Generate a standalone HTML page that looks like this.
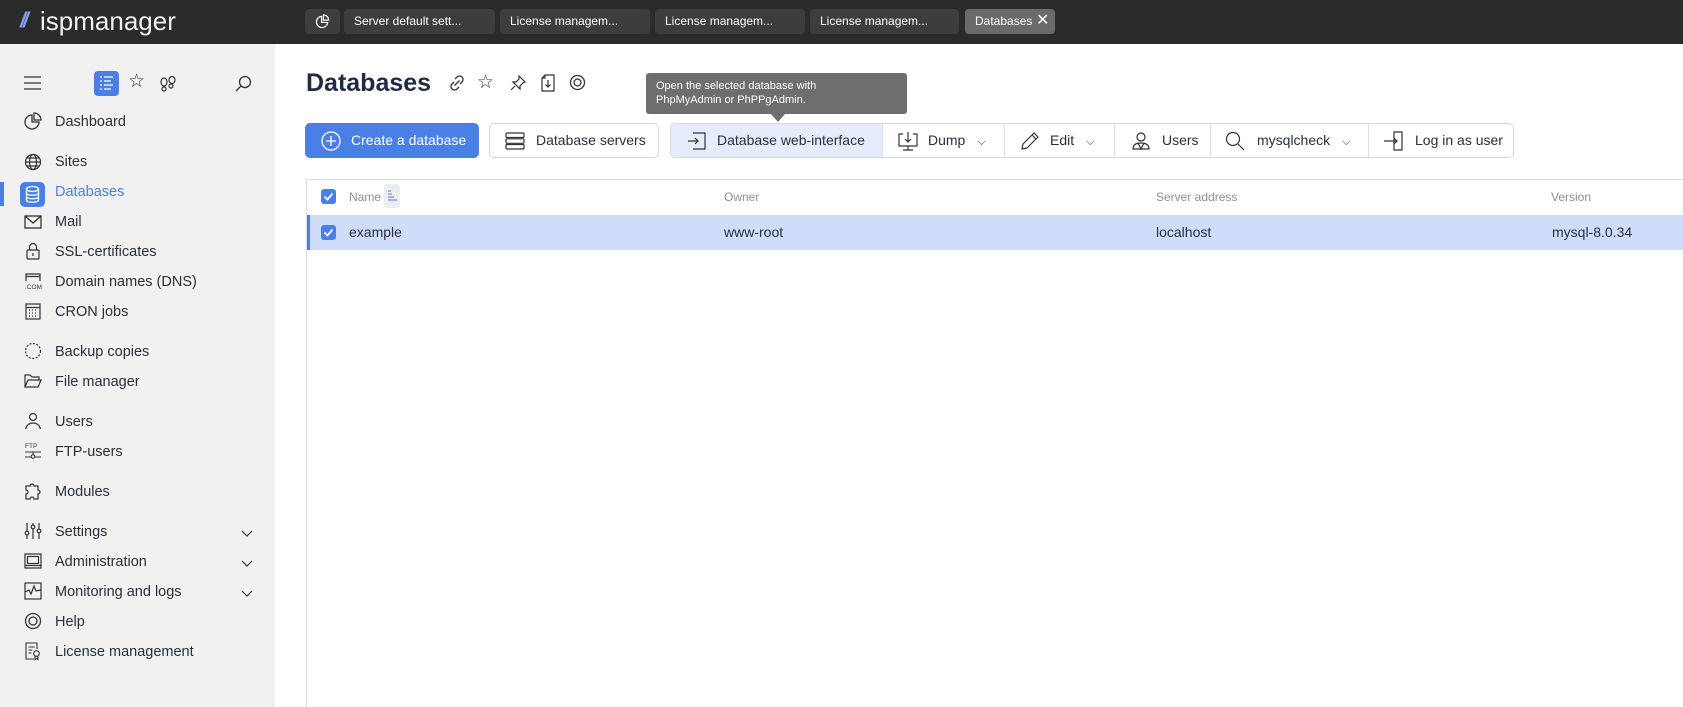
<!DOCTYPE html>
<html><head><meta charset="utf-8"><style>
*{box-sizing:border-box;margin:0;padding:0}
body{width:1683px;height:707px;overflow:hidden;font-family:"Liberation Sans",sans-serif;background:#fff;position:relative;color:#2a2f3a}
.a{position:absolute}
#top{left:0;top:0;width:1683px;height:44px;background:#2b2b2b}
.tab{position:absolute;top:9px;height:25px;background:#3d3d3d;border-radius:4px;color:#fff;font-size:12px;line-height:25px;padding-left:10px;white-space:nowrap}
#side{left:0;top:44px;width:275px;height:663px;background:#f1f1f1}
.mi{position:absolute;left:55px;font-size:14.5px;color:#2a2f3a;white-space:nowrap}
.ic{position:absolute;left:24px;width:18px;height:18px;margin-top:-2px}
.chev{position:absolute;left:241px;width:12px;height:12px}
.btn{position:absolute;top:123px;height:35px;border:1px solid #d5d8de;border-radius:5px;font-size:14px;line-height:33px;white-space:nowrap;color:#2a2f3a}
.seg{position:absolute;top:0;height:33px;border-right:1px solid #dcdfe4;font-size:14px;line-height:33px;white-space:nowrap}
.th{position:absolute;top:190px;font-size:12px;color:#8a8f98}
.td{position:absolute;top:224px;font-size:14px;color:#2a2f3a}
.cb{position:absolute;width:15px;height:15px;background:#4a7fe6;border-radius:3px}
svg{overflow:visible}
</style></head><body>
<div id="top" class="a">
 <div class="a" style="left:20px;top:9px;color:#7da0f0;font-weight:bold;font-style:italic;font-size:21px;letter-spacing:-3px">//</div>
 <div class="a" style="left:40px;top:6px;color:#f0f0f0;font-size:26px">ispmanager</div>
 <div class="tab" style="left:305px;width:35px;padding:0"><svg class="a" style="left:10px;top:5px" width="15" height="15" viewBox="0 0 16 16" fill="none" stroke="#fff" stroke-width="1.3"><path d="M7 2.5A6 6 0 1 0 13.5 9H7z"/><path d="M9 1v5.5h5.5A5.5 5.5 0 0 0 9 1z"/></svg></div>
 <div class="tab" style="left:344px;width:151px">Server default sett...</div>
 <div class="tab" style="left:500px;width:150px">License managem...</div>
 <div class="tab" style="left:655px;width:150px">License managem...</div>
 <div class="tab" style="left:810px;width:149px">License managem...</div>
 <div class="tab" style="left:965px;width:90px;background:#6a6a6a">Databases <span style="font-size:16px;position:absolute;left:71px;top:-1px">✕</span></div>
</div>

<div id="side" class="a">
 <svg class="a" style="left:24px;top:32px" width="18" height="14" stroke="#333" stroke-width="1.3"><path d="M0 1h17M0 7h17M0 13h17"/></svg>
 <div class="a" style="left:94px;top:27px;width:25px;height:25px;background:#4a7fe6;border-radius:4px"><svg class="a" style="left:6px;top:5px" width="14" height="15" stroke="#fff" stroke-width="1.2"><path d="M0 1h2M4 1h9M0 5h2M4 5h7M0 9h2M4 9h9M0 13h2M4 13h7"/></svg></div>
 <div class="a" style="left:128px;top:26px;font-size:19px;color:#333">☆</div>
 <svg class="a" style="left:159px;top:32px" width="18" height="16" fill="none" stroke="#333" stroke-width="1.2"><ellipse cx="5" cy="6" rx="3" ry="4"/><circle cx="5" cy="13" r="2"/><ellipse cx="13" cy="4" rx="3" ry="3.5"/><circle cx="12" cy="10" r="2"/></svg>
 <svg class="a" style="left:235px;top:31px" width="17" height="17" fill="none" stroke="#333" stroke-width="1.3"><circle cx="10" cy="7" r="5.5"/><path d="M6 11L1 16"/></svg>

 <svg class="ic" style="top:70px" viewBox="0 0 18 18" fill="none" stroke="#333" stroke-width="1.3"><path d="M8 3A7 7 0 1 0 15 10H8z"/><path d="M10 1v7h7A7 7 0 0 0 10 1z"/></svg>
 <div class="mi" style="top:70px">Dashboard</div>
 <svg class="ic" style="top:111px" viewBox="0 0 18 18" fill="none" stroke="#333" stroke-width="1.2"><circle cx="9" cy="9" r="7.5"/><ellipse cx="9" cy="9" rx="3.5" ry="7.5"/><path d="M1.5 9h15M3 5h12M3 13h12"/></svg>
 <div class="mi" style="top:110px">Sites</div>
 <div class="a" style="left:0;top:138px;width:4px;height:24px;background:#4a7fe6"></div>
 <div class="a" style="left:20px;top:138px;width:25px;height:25px;background:#4a7fe6;border-radius:5px"><svg class="a" style="left:6px;top:4px" width="13" height="17" fill="none" stroke="#fff" stroke-width="1.3"><ellipse cx="6.5" cy="3" rx="6" ry="2.5"/><path d="M.5 3v11c0 3 12 3 12 0V3M.5 7c0 3 12 3 12 0M.5 10.5c0 3 12 3 12 0"/></svg></div>
 <div class="mi" style="top:140px;color:#4a7fe6">Databases</div>
 <svg class="ic" style="top:171px" viewBox="0 0 18 18" fill="none" stroke="#333" stroke-width="1.3"><rect x="1" y="3" width="16" height="12"/><path d="M1 3l8 7 8-7"/></svg>
 <div class="mi" style="top:170px">Mail</div>
 <svg class="ic" style="top:200px" viewBox="0 0 18 18" fill="none" stroke="#333" stroke-width="1.2"><rect x="3" y="8" width="12" height="9" rx="1"/><path d="M5.5 8V5a3.5 3.5 0 0 1 7 0v3M9 11v3"/></svg>
 <div class="mi" style="top:200px">SSL-certificates</div>
 <svg class="ic" style="top:230px" viewBox="0 0 18 18" fill="none" stroke="#333" stroke-width="1.2"><path d="M2 9V2h14v7M2 4.5h14"/><text x="1" y="17" font-size="6.5" fill="#333" stroke="none" font-family="Liberation Sans">.COM</text></svg>
 <div class="mi" style="top:230px">Domain names (DNS)</div>
 <svg class="ic" style="top:260px" viewBox="0 0 18 18" fill="none" stroke="#333" stroke-width="1.2"><rect x="2" y="2" width="14" height="15"/><path d="M2 5.5h14M5 8h1M8 8h1M11 8h1M5 11h1M8 11h1M11 11h1M5 14h1M8 14h1M11 14h1"/></svg>
 <div class="mi" style="top:260px">CRON jobs</div>
 <svg class="ic" style="top:300px" viewBox="0 0 18 18" fill="none" stroke="#333" stroke-width="1.2" stroke-dasharray="2 1.5"><circle cx="9" cy="9" r="7.5"/></svg>
 <div class="mi" style="top:300px">Backup copies</div>
 <svg class="ic" style="top:330px" viewBox="0 0 18 18" fill="none" stroke="#333" stroke-width="1.2"><path d="M1 15V3h5l2 2h7v3M1 15l3-7h13l-3 7z"/></svg>
 <div class="mi" style="top:330px">File manager</div>
 <svg class="ic" style="top:370px" viewBox="0 0 18 18" fill="none" stroke="#333" stroke-width="1.2"><circle cx="9" cy="5" r="3.5"/><path d="M1.5 17c1-4 4-6 7.5-6s6.5 2 7.5 6"/></svg>
 <div class="mi" style="top:370px">Users</div>
 <svg class="ic" style="top:400px" viewBox="0 0 18 18" fill="none" stroke="#333" stroke-width="1.1"><text x="1" y="6" font-size="6.5" fill="#333" stroke="none" font-family="Liberation Sans">FTP</text><path d="M1 10h16M1 15h6M11 15h6M9 10v2"/><circle cx="9" cy="14.5" r="1.8"/></svg>
 <div class="mi" style="top:400px">FTP-users</div>
 <svg class="ic" style="top:440px" viewBox="0 0 18 18" fill="none" stroke="#333" stroke-width="1.2"><path d="M2 4h4a2 2 0 0 1 4 0h4v4a2 2 0 0 1 0 4v5h-4a2 2 0 0 0-4 0H2v-5a2 2 0 0 0 0-4z"/></svg>
 <div class="mi" style="top:440px">Modules</div>
 <svg class="ic" style="top:480px" viewBox="0 0 18 18" fill="none" stroke="#333" stroke-width="1.2"><path d="M3 1v16M9 1v16M15 1v16"/><circle cx="3" cy="11" r="1.8" fill="#f1f1f1"/><circle cx="9" cy="5" r="1.8" fill="#f1f1f1"/><circle cx="15" cy="9" r="1.8" fill="#f1f1f1"/></svg>
 <div class="mi" style="top:480px">Settings</div>
 <svg class="chev" style="top:484px" fill="none" stroke="#333" stroke-width="1.2"><path d="M1 3l5 5 5-5"/></svg>
 <svg class="ic" style="top:510px" viewBox="0 0 18 18" fill="none" stroke="#333" stroke-width="1.2"><rect x="1" y="2" width="16" height="14"/><rect x="3.5" y="4.5" width="11" height="7"/><path d="M1 13.5h16"/></svg>
 <div class="mi" style="top:510px">Administration</div>
 <svg class="chev" style="top:514px" fill="none" stroke="#333" stroke-width="1.2"><path d="M1 3l5 5 5-5"/></svg>
 <svg class="ic" style="top:540px" viewBox="0 0 18 18" fill="none" stroke="#333" stroke-width="1.2"><rect x="1" y="1" width="16" height="16"/><path d="M1 10l4-2 2 4 3-8 2 5 5-1"/></svg>
 <div class="mi" style="top:540px">Monitoring and logs</div>
 <svg class="chev" style="top:544px" fill="none" stroke="#333" stroke-width="1.2"><path d="M1 3l5 5 5-5"/></svg>
 <svg class="ic" style="top:570px" viewBox="0 0 18 18" fill="none" stroke="#333" stroke-width="1.3"><circle cx="9" cy="9" r="7.5"/><circle cx="9" cy="9" r="4"/></svg>
 <div class="mi" style="top:570px">Help</div>
 <svg class="ic" style="top:600px" viewBox="0 0 18 18" fill="none" stroke="#333" stroke-width="1.1"><path d="M10 17H2V1h11v6M4.5 5h6M4.5 8h4M4.5 11h3"/><circle cx="12.5" cy="11.5" r="2.8"/><path d="M11 14v3.5l1.5-1 1.5 1V14"/></svg>
 <div class="mi" style="top:600px">License management</div>
</div>

<div class="a" style="left:306px;top:69px;font-size:25px;font-weight:bold;color:#1f2a44">Databases</div>
<svg class="a" style="left:449px;top:75px" width="16" height="16" fill="none" stroke="#333" stroke-width="1.3"><path d="M6 4l2-2a3 3 0 0 1 5 5l-2 2M10 12l-2 2a3 3 0 0 1-5-5l2-2M5.5 10.5l5-5"/></svg>
<div class="a" style="left:477px;top:71px;font-size:19px;color:#333">☆</div>
<svg class="a" style="left:510px;top:75px" width="16" height="16" fill="none" stroke="#333" stroke-width="1.2"><path d="M9 1l6 6-2 1-3 3 0 3-7-7 3 0 3-3zM5 11l-4 4"/></svg>
<svg class="a" style="left:541px;top:74px" width="14" height="18" fill="none" stroke="#333" stroke-width="1.2"><path d="M4 1h9v16H1V4zM4 1v3H1M7 6v7M4.5 10.5L7 13l2.5-2.5"/></svg>
<svg class="a" style="left:569px;top:74px" width="17" height="17" fill="none" stroke="#333" stroke-width="1.3"><circle cx="8.5" cy="8.5" r="7"/><circle cx="8.5" cy="8.5" r="3.5"/></svg>

<div class="a" style="left:646px;top:73px;width:261px;height:41px;background:#6e6e6e;border-radius:3px;color:#fff;font-size:11px;line-height:14px;padding:6px 10px">Open the selected database with<br>PhpMyAdmin or PhPPgAdmin.</div>
<div class="a" style="left:771px;top:114px;width:0;height:0;border-left:7px solid transparent;border-right:7px solid transparent;border-top:8px solid #6e6e6e"></div>

<div class="btn" style="left:305px;width:174px;background:#4a7fe6;border-color:#4a7fe6;color:#fff;padding-left:45px">Create a database
 <svg class="a" style="left:15px;top:7px" width="20" height="20" fill="none" stroke="#fff" stroke-width="1.3"><circle cx="10" cy="10" r="9"/><path d="M10 5v10M5 10h10"/></svg></div>
<div class="btn" style="left:489px;width:170px;padding-left:46px">Database servers
 <svg class="a" style="left:15px;top:8px" width="20" height="18" fill="none" stroke="#333" stroke-width="1.2"><rect x="1" y="1" width="18" height="4.5" rx="1"/><rect x="1" y="6.8" width="18" height="4.5" rx="1"/><rect x="1" y="12.5" width="18" height="4.5" rx="1"/></svg></div>
<div class="btn" style="left:670px;width:844px;overflow:hidden">
 <div class="seg" style="left:0;width:212px;background:#e5ecfb;padding-left:46px">Database web-interface
  <svg class="a" style="left:16px;top:8px" width="20" height="18" fill="none" stroke="#333" stroke-width="1.2"><path d="M6 1h12v16H6M1 9h10M8 6l3 3-3 3"/></svg></div>
 <div class="seg" style="left:212px;width:122px;padding-left:45px">Dump <span style="font-size:11px;margin-left:8px">⌵</span>
  <svg class="a" style="left:15px;top:7px" width="20" height="20" fill="none" stroke="#333" stroke-width="1.2"><path d="M5 3H1v12h18V3h-4M10 1v10M7 8l3 3 3-3M10 15v4M5 19h10"/></svg></div>
 <div class="seg" style="left:334px;width:110px;padding-left:45px">Edit <span style="font-size:11px;margin-left:8px">⌵</span>
  <svg class="a" style="left:15px;top:7px" width="20" height="20" fill="none" stroke="#333" stroke-width="1.2"><path d="M14 2l4 4L7 17l-5 1 1-5z M12 4l4 4"/></svg></div>
 <div class="seg" style="left:444px;width:96px;padding-left:47px">Users
  <svg class="a" style="left:16px;top:7px" width="20" height="20" fill="none" stroke="#333" stroke-width="1.2"><circle cx="10" cy="6" r="4"/><path d="M2 18c0-4 3-6 8-6s8 2 8 6zM7 12l3 6 3-6"/></svg></div>
 <div class="seg" style="left:540px;width:158px;padding-left:46px">mysqlcheck <span style="font-size:11px;margin-left:8px">⌵</span>
  <svg class="a" style="left:14px;top:7px" width="20" height="20" fill="none" stroke="#333" stroke-width="1.2"><circle cx="8" cy="8" r="6.5"/><path d="M13 13l6 6"/></svg></div>
 <div class="seg" style="left:698px;width:146px;padding-left:46px;border:none">Log in as user
  <svg class="a" style="left:14px;top:7px" width="22" height="20" fill="none" stroke="#333" stroke-width="1.2"><path d="M11 1h8v18h-8zM1 10h13M11 7l3 3-3 3"/></svg></div>
</div>

<div class="a" style="left:306px;top:179px;width:1377px;height:528px;border-top:1px solid #dcdfe4;border-left:1px solid #dcdfe4"></div>
<div class="cb" style="left:321px;top:189px"><svg width="15" height="15" fill="none" stroke="#fff" stroke-width="1.8"><path d="M3.5 7.5l3 3 5-6"/></svg></div>
<div class="th" style="left:349px">Name</div>
<div class="a" style="left:384px;top:184px;width:16px;height:24px;background:#ebedf0;border-radius:3px"><svg class="a" style="left:4px;top:6px" width="9" height="11" stroke="#4a7fe6" stroke-width="1"><path d="M0 1h3M0 4h4M0 7h6M0 10h9"/></svg></div>
<div class="th" style="left:724px">Owner</div>
<div class="th" style="left:1156px">Server address</div>
<div class="th" style="left:1551px">Version</div>
<div class="a" style="left:307px;top:215px;width:1376px;height:35px;background:#cfdcfa;border-left:3px solid #4a7fe6"></div>
<div class="cb" style="left:321px;top:225px"><svg width="15" height="15" fill="none" stroke="#fff" stroke-width="1.8"><path d="M3.5 7.5l3 3 5-6"/></svg></div>
<div class="td" style="left:349px">example</div>
<div class="td" style="left:724px">www-root</div>
<div class="td" style="left:1156px">localhost</div>
<div class="td" style="left:1552px">mysql-8.0.34</div>
</body></html>
